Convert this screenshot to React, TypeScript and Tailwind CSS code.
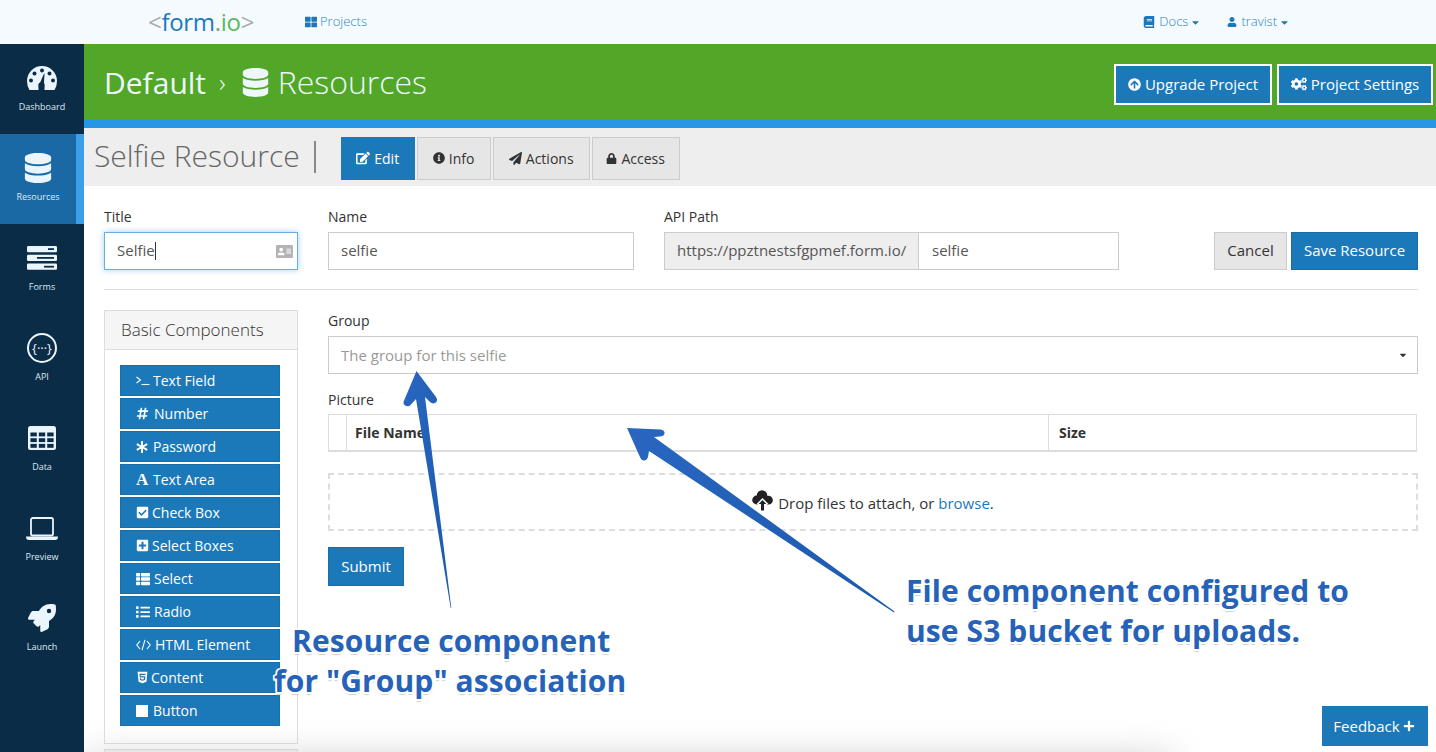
import React from "react";
import {
  FaDatabase, FaRocket, FaEdit, FaInfoCircle, FaPaperPlane, FaLock,
  FaThLarge, FaBook, FaUser, FaCaretDown, FaArrowCircleUp, FaCogs, FaAddressCard, FaHashtag, FaAsterisk,
  FaCheckSquare, FaPlusSquare, FaThList, FaList, FaHtml5, FaSquareFull, FaPlus,
} from "react-icons/fa";

const font = { fontFamily: '"Open Sans", "Noto Sans", sans-serif' };
const NAVY = "#0a2c47";
const ICON = "#eaf5fd";

function Gauge() {
  return (
    <svg width="30" height="24" viewBox="0 0 30 24">
      <path d="M2.5 24 Q0 20 0 15 A15 15 0 0 1 30 15 Q30 20 27.5 24 Z" fill={ICON} />
      <g fill={NAVY}>
        <circle cx="15" cy="4.5" r="2" /><circle cx="7.5" cy="7.5" r="2" /><circle cx="22.5" cy="7.5" r="2" />
        <circle cx="4" cy="14.5" r="2" /><circle cx="26" cy="14.5" r="2" />
        <circle cx="14.5" cy="19.5" r="3.2" />
        <path d="M12.5 18 L17 7.5 L17.5 8 L16.8 20 Z" />
        <rect x="11.5" y="21" width="6" height="3" />
      </g>
    </svg>
  );
}

function Server() {
  return (
    <svg width="30" height="24" viewBox="0 0 30 24">
      <g fill={ICON}>
        <rect x="0" y="0" width="30" height="6.2" rx="1.2" />
        <rect x="0" y="8.8" width="30" height="6.2" rx="1.2" />
        <rect x="0" y="17.6" width="30" height="6.2" rx="1.2" />
      </g>
      <g fill={NAVY}>
        <rect x="21" y="2.2" width="6" height="1.8" />
        <rect x="10" y="11" width="17" height="1.8" />
        <rect x="17" y="19.8" width="10" height="1.8" />
      </g>
    </svg>
  );
}

function TableIcon() {
  return (
    <svg width="28" height="24" viewBox="0 0 28 24">
      <rect x="0" y="0" width="28" height="24" rx="2.5" fill={ICON} />
      <g fill={NAVY}>
        {[6.5, 12.2, 17.9].map((y) => [2.4, 10.8, 19.2].map((x) => (
          <rect key={x + "-" + y} x={x} y={y} width="6.4" height="3.9" />
        )))}
      </g>
    </svg>
  );
}

function Laptop() {
  return (
    <svg width="32" height="23" viewBox="0 0 32 23">
      <rect x="5" y="1" width="22" height="17.5" rx="1.8" fill="none" stroke={ICON} strokeWidth="1.8" />
      <path d="M0 19.5 H32 Q32 23 29 23 H3 Q0 23 0 19.5 Z" fill={ICON} />
    </svg>
  );
}

function Terminal() {
  return (
    <svg width="14" height="11" viewBox="0 0 14 11" fill="none" stroke="white" strokeWidth="1.1">
      <path d="M0.5 2 L4.5 5 L0.5 8" />
      <path d="M5.5 9.5 H13.5" />
    </svg>
  );
}

function Code() {
  return (
    <svg width="15" height="12" viewBox="0 0 15 12" fill="none" stroke="white" strokeWidth="1.1">
      <path d="M4 2 L0.8 6 L4 10" /><path d="M11 2 L14.2 6 L11 10" /><path d="M9 0.8 L6 11.2" />
    </svg>
  );
}

function CloudUp() {
  return (
    <svg width="21" height="21" viewBox="0 0 21 21">
      <g fill="#222222">
        <circle cx="4.6" cy="10" r="4.4" /><circle cx="10" cy="5.6" r="5.3" /><circle cx="16.4" cy="10.2" r="4.4" />
        <rect x="4.6" y="7" width="12" height="7" />
      </g>
      <path d="M10.5 8 L16.5 14 H13 V21 H8 V14 H4.5 Z" fill="white" />
      <path d="M10.5 10 L14.3 14 H12 V20.5 H9 V14 H6.7 Z" fill="#222222" />
    </svg>
  );
}

function SideItem({ icon, label, active }: { icon: React.ReactNode; label: string; active?: boolean }) {
  return (
    <div className={active
      ? "h-[90px] flex flex-col items-center pt-[16px] text-[#eaf5fd] bg-[#1a69a4] border-r-[8px] border-[#3a9fe6]"
      : "h-[90px] flex flex-col items-center pt-[16px] text-[#eaf5fd]"}>
      <div className="h-[36px] flex items-center justify-center">{icon}</div>
      <div className="mt-[4px] text-[9px] leading-[14px] text-[#dfe9f1]">{label}</div>
    </div>
  );
}

function CompButton({ icon, label, w }: { icon: React.ReactNode; label: string; w: string }) {
  return (
    <div className="h-[31px] bg-[#1c79b9] border border-[#1a6da7] pl-[15px] flex items-center text-white text-[14px] leading-none">
      <span className={w + " shrink-0 flex items-center"}>{icon}</span>
      <span>{label}</span>
    </div>
  );
}

function Tab({ icon, label, active, w }: { icon: React.ReactNode; label: string; active?: boolean; w: string }) {
  return (
    <div className={(active
      ? "bg-[#1c79b9] border-[#1c79b9] text-white "
      : "bg-[#e6e6e6] border-[#cccccc] text-[#333333] ") + w + " h-[43px] border flex items-center justify-center gap-[4px] text-[14px]"}>
      {icon}
      <span>{label}</span>
    </div>
  );
}

const annotation = "absolute z-30 font-bold text-[30px] tracking-[0.1px] leading-[40px] text-[#2562b8] whitespace-nowrap [text-shadow:1.5px_0_0_#fff,-1.5px_0_0_#fff,0_1.5px_0_#fff,0_-1.5px_0_#fff,1.5px_1.5px_0_#fff,-1.5px_1.5px_0_#fff,1.5px_-1.5px_0_#fff,-1.5px_-1.5px_0_#fff,0_3px_1px_#cfcfcf]";

export default function App() {
  return (
    <div className="relative w-full h-[752px] overflow-hidden bg-white text-[#333333] flex flex-col" style={font}>
      <header className="h-[44px] shrink-0 bg-[#f5faff] flex items-center pl-[148px] pr-[146px] text-[#2e86c4]">
        <div className="w-[106px] flex items-baseline justify-center text-[24px] leading-none tracking-[-0.3px]">
          <span className="text-[#a8acae]">&lt;</span>
          <span className="text-[#1c79b9]">form</span>
          <span className="text-[#8a9aa0]">.</span>
          <span className="text-[#5cb85c]">io</span>
          <span className="text-[#a8acae]">&gt;</span>
        </div>
        <div className="ml-[51px] flex items-center gap-[3px] font-light text-[13px]">
          <FaThLarge className="text-[12px] text-[#1c79b9]" />
          <span>Projects</span>
        </div>
        <div className="ml-auto flex items-center gap-[4px] font-light text-[13px]">
          <FaBook className="text-[12px] text-[#1c79b9]" />
          <span>Docs</span>
          <FaCaretDown className="text-[11px] -ml-[2px] text-[#1c79b9]" />
        </div>
        <div className="ml-[26px] flex items-center gap-[4px] font-light text-[13px]">
          <FaUser className="text-[10px] text-[#1c79b9]" />
          <span>travist</span>
          <FaCaretDown className="text-[11px] -ml-[2px] text-[#1c79b9]" />
        </div>
      </header>

      <div className="flex flex-1 min-h-0">
        <aside className="relative z-20 w-[84px] shrink-0 bg-[#0a2c47]">
          <SideItem icon={<Gauge />} label="Dashboard" />
          <SideItem active icon={<FaDatabase className="text-[30px]" />} label="Resources" />
          <SideItem icon={<Server />} label="Forms" />
          <SideItem label="API" icon={
            <div className="w-[30px] h-[30px] rounded-full border-[2px] border-[#eaf5fd] flex items-center justify-center text-[13px] leading-none">
              {"{\u00b7\u00b7\u00b7}"}
            </div>
          } />
          <SideItem icon={<TableIcon />} label="Data" />
          <SideItem icon={<Laptop />} label="Preview" />
          <SideItem icon={<FaRocket className="text-[28px]" />} label="Launch" />
        </aside>

        <main className="relative flex-1 min-w-0 flex flex-col">
          <div className="h-[84px] shrink-0 bg-[#52a728] border-b-[8px] border-[#2896e6] flex items-center pl-[20px] pr-[3px] text-[#eef7fb]">
            <span className="text-[30px]">Default</span>
            <span className="text-[26px] font-light ml-[13px] mr-[15px]">›</span>
            <FaDatabase className="text-[29px] mr-[8px]" />
            <span className="text-[32px] font-light">Resources</span>
            <div className="ml-auto flex gap-[5px] mt-[4px]">
              <div className="h-[41px] w-[158px] bg-[#1c79b9] border-[2px] border-white text-white text-[15px] flex items-center justify-center gap-[4px]">
                <FaArrowCircleUp className="text-[13px]" /><span>Upgrade Project</span>
              </div>
              <div className="h-[41px] w-[156px] bg-[#1c79b9] border-[2px] border-white text-white text-[15px] flex items-center justify-center gap-[4px]">
                <FaCogs className="text-[16px]" /><span>Project Settings</span>
              </div>
            </div>
          </div>

          <div className="h-[58px] shrink-0 bg-[#eeeeee] flex items-center pl-[10px]">
            <span className="text-[30px] font-light text-[#666666] mb-[4px]">Selfie Resource</span>
            <span className="w-[2px] h-[32px] bg-[#888888] ml-[14px] mr-[25px]" />
            <div className="flex gap-[2px] mt-[2px]">
              <Tab active w="w-[74px]" icon={<FaEdit className="text-[14px]" />} label="Edit" />
              <Tab w="w-[74px]" icon={<FaInfoCircle className="text-[12px]" />} label="Info" />
              <Tab w="w-[97px]" icon={<FaPaperPlane className="text-[13px]" />} label="Actions" />
              <Tab w="w-[88px]" icon={<FaLock className="text-[11px]" />} label="Access" />
            </div>
          </div>

          <div className="flex-1 min-h-0 pl-[20px] pr-[18px] pt-[21px] text-[14px]">
            <div className="flex items-end">
              <div className="w-[194px]">
                <div className="leading-[20px] mb-[5px]">Title</div>
                <div className="h-[38px] border border-[#66afe9] shadow-[0_0_6px_rgba(102,175,233,0.6)] flex items-center pl-[12px] pr-[4px] text-[15px] text-[#555555]">
                  <span className="-mt-[2px]">Selfie</span><span className="w-px h-[18px] bg-[#333333]" />
                  <FaAddressCard className="ml-auto text-[17px] text-[#b3b3b3]" />
                </div>
              </div>
              <div className="w-[306px] ml-[30px]">
                <div className="leading-[20px] mb-[5px]">Name</div>
                <div className="h-[38px] border border-[#cccccc] flex items-center pl-[12px] pb-[2px] text-[15px] text-[#555555]">selfie</div>
              </div>
              <div className="w-[455px] ml-[30px]">
                <div className="leading-[20px] mb-[5px]">API Path</div>
                <div className="h-[38px] flex text-[15px] text-[#555555]">
                  <div className="w-[255px] shrink-0 bg-[#eeeeee] border border-[#cccccc] flex items-center pl-[12px] pb-[2px] whitespace-nowrap">https://ppztnestsfgpmef.form.io/</div>
                  <div className="flex-1 border border-l-0 border-[#cccccc] flex items-center pl-[13px] pb-[2px]">selfie</div>
                </div>
              </div>
              <div className="ml-auto flex gap-[4px] text-[15px]">
                <div className="h-[38px] w-[73px] bg-[#e6e6e6] border border-[#cccccc] flex items-center justify-center pb-[2px]">Cancel</div>
                <div className="h-[38px] w-[127px] bg-[#1c79b9] border border-[#1a6da7] text-white flex items-center justify-center pb-[2px]">Save Resource</div>
              </div>
            </div>

            <div className="h-px bg-[#dddddd] mt-[19px] mb-[20px]" />

            <div className="flex items-start">
              <div className="w-[194px] shrink-0">
                <div className="border border-[#dddddd]">
                  <div className="h-[39px] bg-[#f5f5f5] border-b border-[#dddddd] flex items-center pl-[16px] text-[17px] font-light text-[#333333]">Basic Components</div>
                  <div className="pl-[15px] pr-[17px] pt-[15px] pb-[17px] flex flex-col gap-[2px]">
                    <CompButton w="w-[17px]" icon={<Terminal />} label="Text Field" />
                    <CompButton w="w-[18px]" icon={<FaHashtag className="text-[13px]" />} label="Number" />
                    <CompButton w="w-[17px]" icon={<FaAsterisk className="text-[12px]" />} label="Password" />
                    <CompButton w="w-[17px]" icon={<span className="font-bold text-[17px] leading-none" style={{ fontFamily: '"Liberation Serif", serif' }}>A</span>} label="Text Area" />
                    <CompButton w="w-[16px]" icon={<FaCheckSquare className="text-[13px]" />} label="Check Box" />
                    <CompButton w="w-[16px]" icon={<FaPlusSquare className="text-[13px]" />} label="Select Boxes" />
                    <CompButton w="w-[18px]" icon={<FaThList className="text-[14px]" />} label="Select" />
                    <CompButton w="w-[18px]" icon={<FaList className="text-[14px]" />} label="Radio" />
                    <CompButton w="w-[19px]" icon={<Code />} label="HTML Element" />
                    <CompButton w="w-[15px]" icon={<FaHtml5 className="text-[13px]" />} label="Content" />
                    <CompButton w="w-[17px]" icon={<FaSquareFull className="text-[12px]" />} label="Button" />
                  </div>
                </div>
                <div className="mt-[5px] h-[30px] border border-[#dddddd] bg-[#f5f5f5]" />
              </div>

              <div className="flex-1 min-w-0 ml-[30px] pt-px">
                <div className="leading-[20px] mb-[5px]">Group</div>
                <div className="h-[38px] border border-[#cccccc] flex items-center pl-[12px] pr-[9px] text-[15px] text-[#999999]">
                  <span>The group for this selfie</span>
                  <FaCaretDown className="ml-auto text-[10px] text-[#333333]" />
                </div>
                <div className="leading-[20px] mt-[16px] mb-[4px]">Picture</div>
                <div className="h-[38px] mr-px border border-b-2 border-[#dddddd] flex items-stretch font-bold">
                  <div className="w-[18px] border-r border-[#dddddd]" />
                  <div className="w-[702px] border-r border-[#dddddd] flex items-center pl-[8px]">File Name</div>
                  <div className="flex items-center pl-[10px]">Size</div>
                </div>
                <div className="mt-[21px] h-[58px] border-[2px] border-dashed border-[#dddddd] flex items-center justify-center text-[15px]">
                  <span className="mr-[5px] -mt-[4px]"><CloudUp /></span>
                  <span className="mt-[2px]">Drop files to attach, or <span className="text-[#1c79b9]">browse</span>.</span>
                </div>
                <div className="mt-[16px] h-[39px] w-[76px] bg-[#1c79b9] border border-[#1a6da7] text-[15px] text-white flex items-center justify-center">Submit</div>
              </div>
            </div>
          </div>

          <div className="absolute z-0 left-[0px] top-[715px] w-[1090px] h-[24px] rounded-full bg-[#c4c4c4] blur-[18px]" />
        </main>
      </div>

      <svg className="absolute inset-0 z-20 pointer-events-none" width="1436" height="752" viewBox="0 0 1436 752">
        <defs>
          <linearGradient id="a1" x1="0" y1="0" x2="1" y2="1">
            <stop offset="0" stopColor="#2a66c0" />
            <stop offset="1" stopColor="#1a5aae" />
          </linearGradient>
        </defs>
        <path d="M416.5 371 L436 397 Q438.5 401 435 403 Q432 404.5 429 401 L425 397 L451.3 608 L450.7 608 L416 399 L410.5 405 Q407.5 407.5 404.5 405 Q402.5 403 404.5 399.5 Z" fill="url(#a1)" />
        <path d="M627 428 L660.5 429.5 Q665 430.5 664.5 433.5 Q664 436.5 659.5 436.5 L654 437 L894.5 611.5 L894 612.5 L649 451 L648 457 Q646.5 461 643.5 460.5 Q641 460 639.5 456 Z" fill="url(#a1)" />
      </svg>

      <div className={annotation + " left-[292px] top-[621px]"}>Resource component</div>
      <div className={annotation + " left-[274px] top-[661px]"}>for "Group" association</div>
      <div className={annotation + " left-[906px] top-[571px]"}>File component configured to</div>
      <div className={annotation + " left-[906px] top-[611px]"}>use S3 bucket for uploads.</div>

      <div className="absolute z-30 left-[1322px] top-[706px] w-[106px] h-[40px] bg-[#1c79b9] text-white text-[15px] flex items-center justify-center gap-[3px] pr-[2px]">
        <span>Feedback</span><FaPlus className="text-[12px]" />
      </div>
    </div>
  );
}
